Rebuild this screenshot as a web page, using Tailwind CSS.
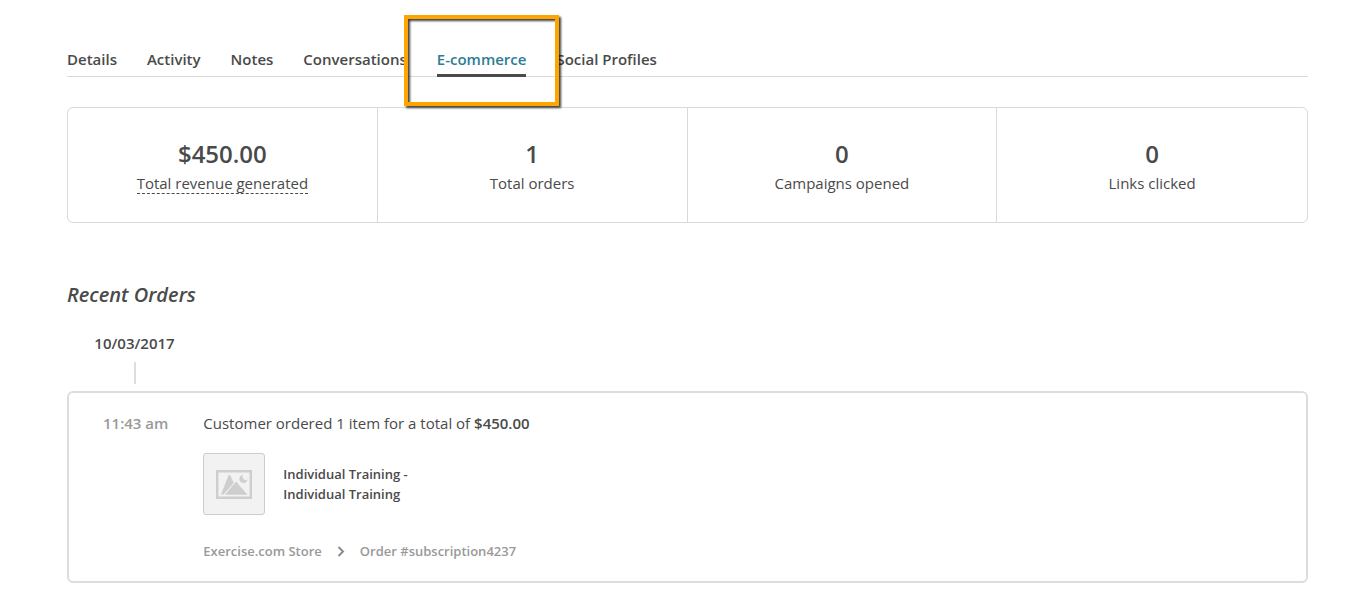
<!DOCTYPE html>
<html lang="en">
<head>
    <meta charset="UTF-8">
    <meta name="viewport" content="width=device-width, initial-scale=1.0">
    <title>Customer Profile - E-commerce</title>
    <script src="https://cdn.jsdelivr.net/npm/@tailwindcss/browser@4"></script>
</head>
<body class="bg-white text-[#4a4a4a] font-['Open_Sans','Noto_Sans',sans-serif] text-[15px] leading-6 pl-[67px] pr-[54px] pt-[47px] pb-8">

    <!-- Tabs -->
    <nav class="flex gap-[30px] border-b border-[#d9d9d9] font-semibold">
        <a href="#details" class="pb-[5px]">Details</a>
        <a href="#activity" class="pb-[5px]">Activity</a>
        <a href="#notes" class="pb-[5px]">Notes</a>
        <a href="#conversations" class="pb-[5px]">Conversations</a>
        <a href="#ecommerce" class="relative z-10 -mb-px pb-[3px] border-b-3 border-[#4a4a4a] text-[#2c7d92]" aria-current="page">
            E-commerce
            <!-- Highlight frame -->
            <span class="absolute -left-[33px] -right-[33px] -top-8 -bottom-8 border-4 border-[#ffa500] drop-shadow-[2px_2px_1px_rgba(0,0,0,0.75)] pointer-events-none"></span>
        </a>
        <a href="#social" class="pb-[5px]">Social Profiles</a>
    </nav>

    <!-- Stats -->
    <section class="mt-[30px] grid grid-cols-4 divide-x divide-[#d9d9d9] border border-[#d9d9d9] rounded-md text-center">
        <div class="pt-[30px] pb-[27px]">
            <p class="text-2xl leading-8 font-semibold">$450.00</p>
            <p class="mt-px"><span class="inline-block leading-5 border-b border-dashed border-[#4a4a4a]">Total revenue generated</span></p>
        </div>
        <div class="pt-[30px] pb-[27px]">
            <p class="text-2xl leading-8 font-semibold">1</p>
            <p class="mt-px">Total orders</p>
        </div>
        <div class="pt-[30px] pb-[27px]">
            <p class="text-2xl leading-8 font-semibold">0</p>
            <p class="mt-px">Campaigns opened</p>
        </div>
        <div class="pt-[30px] pb-[27px]">
            <p class="text-2xl leading-8 font-semibold">0</p>
            <p class="mt-px">Links clicked</p>
        </div>
    </section>

    <!-- Recent Orders -->
    <section class="mt-14">
        <h2 class="text-xl leading-8 font-semibold italic">Recent Orders</h2>

        <div class="mt-5 w-[135px] flex flex-col items-center">
            <h3 class="font-semibold">10/03/2017</h3>
            <div class="mt-[7px] w-[2px] h-[22px] bg-[#ddd]"></div>
        </div>

        <article class="mt-[7px] flex gap-[35px] border-2 border-[#ddd] rounded-md pl-[34px] pr-8 pt-[18px] pb-5">
            <time class="shrink-0 font-semibold text-[#999]">11:43 am</time>
            <div>
                <p>Customer ordered 1 item for a total of <strong class="font-semibold">$450.00</strong></p>
                <div class="mt-[18px] flex items-center gap-[18px]">
                    <div class="size-[62px] shrink-0 flex items-center justify-center bg-[#f2f2f2] border border-[#ccc] rounded-[3px]">
                        <svg width="36" height="29" viewBox="0 0 36 29" fill="#cecece" aria-hidden="true">
                            <path fill-rule="evenodd" d="M0 0H36V29H0ZM2.4 2.4V26.6H33.6V2.4Z"/>
                            <path d="M5 24.5L12.6 5H14L18 13.5L8 24.5Z"/>
                            <path d="M9 24.8L20 11.5L31.5 24.8Z"/>
                            <path d="M27 5A4 4 0 1 0 31.4 9.5A3.2 3.2 0 0 1 27 5Z"/>
                            <path d="M8 24.8L18.6 12.4" stroke="#f2f2f2" stroke-width="1"/>
                        </svg>
                    </div>
                    <p class="text-[13px] leading-5 font-semibold">Individual Training -<br>Individual Training</p>
                </div>
                <div class="mt-[26px] flex items-center text-[13px] leading-5 font-semibold text-[#999]">
                    <a href="#store">Exercise.com Store</a>
                    <svg class="mx-[15px]" width="8" height="11" viewBox="0 0 8 11" fill="none" stroke="#8c8c8c" stroke-width="2" aria-hidden="true">
                        <path d="M1.5 1L6 5.5L1.5 10"/>
                    </svg>
                    <a href="#order">Order #subscription4237</a>
                </div>
            </div>
        </article>
    </section>

</body>
</html>
